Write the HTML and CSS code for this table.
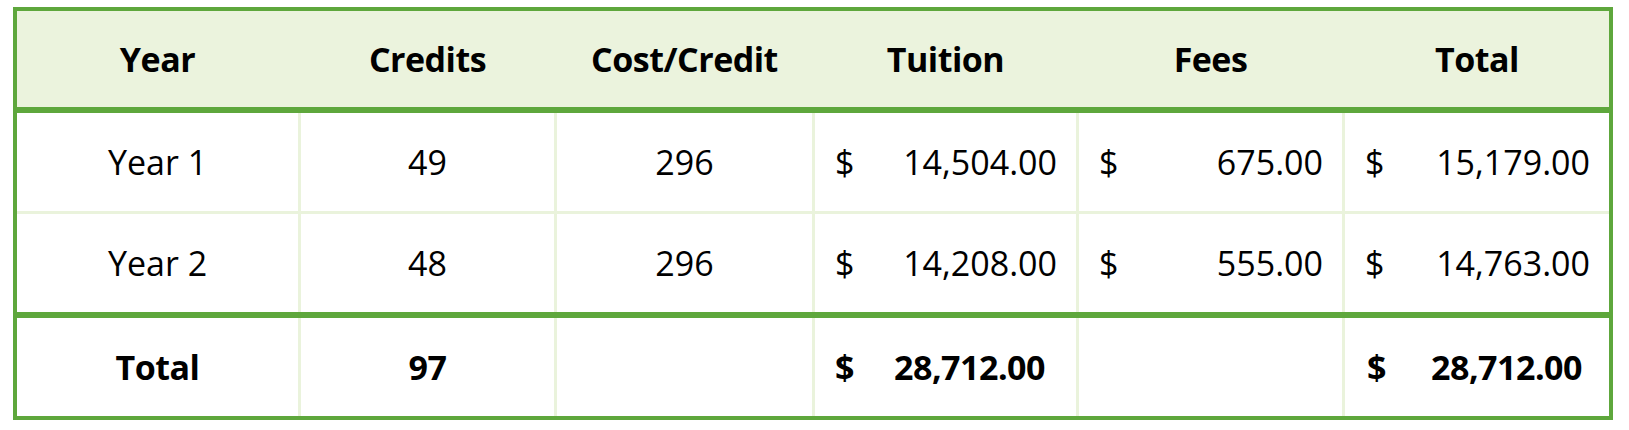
FILE: index.html
```html
<!DOCTYPE html>
<html lang="en">
<head>
<meta charset="utf-8">
<title>Tuition cost</title>
<link rel="stylesheet" href="styles.css">
</head>
<body>
<table class="cost-table">
  <colgroup>
    <col class="col-year">
    <col class="col-credits">
    <col class="col-cost">
    <col class="col-tuition">
    <col class="col-fees">
    <col class="col-total">
  </colgroup>
  <thead>
    <tr>
      <th>Year</th>
      <th>Credits</th>
      <th>Cost/Credit</th>
      <th>Tuition</th>
      <th>Fees</th>
      <th>Total</th>
    </tr>
  </thead>
  <tbody>
    <tr>
      <td>Year 1</td>
      <td>49</td>
      <td>296</td>
      <td class="money-cell"><div class="money"><span>$</span><span>14,504.00</span></div></td>
      <td class="money-cell"><div class="money"><span>$</span><span>675.00</span></div></td>
      <td class="money-cell"><div class="money"><span>$</span><span>15,179.00</span></div></td>
    </tr>
    <tr>
      <td>Year 2</td>
      <td>48</td>
      <td>296</td>
      <td class="money-cell"><div class="money"><span>$</span><span>14,208.00</span></div></td>
      <td class="money-cell"><div class="money"><span>$</span><span>555.00</span></div></td>
      <td class="money-cell"><div class="money"><span>$</span><span>14,763.00</span></div></td>
    </tr>
  </tbody>
  <tfoot>
    <tr>
      <td>Total</td>
      <td>97</td>
      <td></td>
      <td class="money-cell"><div class="money money-tuition"><span>$</span><span>28,712.00</span></div></td>
      <td></td>
      <td class="money-cell"><div class="money money-grand"><span>$</span><span>28,712.00</span></div></td>
    </tr>
  </tfoot>
</table>
</body>
</html>
```

FILE: styles.css
```css
body {
  margin: 0;
  background: #ffffff;
  color: #000000;
  font-family: "Open Sans", "Noto Sans", sans-serif;
}

.cost-table {
  margin: 7px 0 0 13px;
  width: 1600px;
  table-layout: fixed;
  border-collapse: separate;
  border-spacing: 0;
  border: 4px solid #5ea73c;
  font-size: 34px;
}

.col-year { width: 281px; }
.col-credits { width: 256px; }
.col-cost { width: 258px; }
.col-tuition { width: 264px; }
.col-fees { width: 266px; }
.col-total { width: 267px; }

.cost-table th,
.cost-table td {
  box-sizing: border-box;
  padding: 0;
  text-align: center;
  vertical-align: middle;
  line-height: 1;
}

.cost-table th + th,
.cost-table td + td {
  padding-left: 3px;
}

.cost-table td + td {
  box-shadow: inset 3px 0 0 #eaf3dc;
}

.cost-table thead th {
  height: 102px;
  background: #ebf3dd;
  border-bottom: 6px solid #5ea73c;
  font-weight: 700;
  letter-spacing: -0.5px;
}

.cost-table tbody td {
  height: 98px;
  font-weight: 400;
}

.cost-table tbody tr:first-child td {
  height: 101px;
  border-bottom: 3px solid #eaf3dc;
}

.cost-table tfoot td {
  height: 104px;
  border-top: 6px solid #5ea73c;
  font-weight: 700;
  letter-spacing: -0.5px;
}

.money {
  display: flex;
  justify-content: space-between;
  padding: 0 19px 0 20px;
}

.money-tuition {
  padding-right: 31px;
}

.money-grand {
  padding: 0 27px 0 22px;
}
```
